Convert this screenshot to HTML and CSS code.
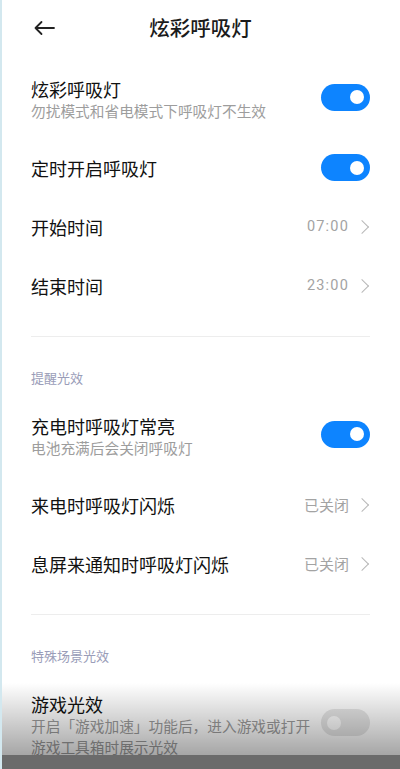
FILE: index.html
```html
<!DOCTYPE html>
<html lang="zh-CN">
<head>
<meta charset="UTF-8" />
<meta name="viewport" content="width=device-width, initial-scale=1.0">
<title>炫彩呼吸灯</title>
<link rel="stylesheet" href="styles.css">
</head>
<body>
<div class="page">
<div class="header">
<svg class="back" width="22" height="16" viewBox="0 0 22 16">
<path d="M21 8H2.5M8.5 2L2.5 8L8.5 14" fill="none" stroke="#222" stroke-width="1.8" stroke-linecap="round" stroke-linejoin="round"/>
</svg>
<h1>炫彩呼吸灯</h1>
</div>

<div class="row two first">
<div class="text">
<div class="title">炫彩呼吸灯</div>
<div class="sub">勿扰模式和省电模式下呼吸灯不生效</div>
</div>
<span class="switch on"></span>
</div>

<div class="row">
<div class="title">定时开启呼吸灯</div>
<span class="switch on"></span>
</div>

<div class="row">
<div class="title">开始时间</div>
<div class="value"><span class="num">07:00</span><span class="arrow"></span></div>
</div>

<div class="row">
<div class="title">结束时间</div>
<div class="value"><span class="num">23:00</span><span class="arrow"></span></div>
</div>

<div class="divider"></div>
<div class="label">提醒光效</div>

<div class="row two">
<div class="text">
<div class="title">充电时呼吸灯常亮</div>
<div class="sub">电池充满后会关闭呼吸灯</div>
</div>
<span class="switch on"></span>
</div>

<div class="row">
<div class="title">来电时呼吸灯闪烁</div>
<div class="value">已关闭<span class="arrow"></span></div>
</div>

<div class="row">
<div class="title">息屏来通知时呼吸灯闪烁</div>
<div class="value">已关闭<span class="arrow"></span></div>
</div>

<div class="divider"></div>
<div class="label">特殊场景光效</div>

<div class="row two">
<div class="text">
<div class="title">游戏光效</div>
<div class="sub">开启「游戏加速」功能后，进入游戏或打开游戏工具箱时展示光效</div>
</div>
<span class="switch"></span>
</div>

<div class="shade"></div>
<div class="band"></div>
</div>
</body>
</html>
```

FILE: styles.css
```css
body {
margin: 0;
background: #fff;
font-family: "Noto Sans CJK SC", "Noto Sans", sans-serif;
color: #1b1b1b;
}

.page {
position: relative;
height: 769px;
overflow: hidden;
box-sizing: border-box;
border-left: 2px solid #d3e8ef;
padding: 0 30px 0 29px;
}

.header {
position: relative;
height: 56px;
display: flex;
align-items: center;
justify-content: center;
}

.header h1 {
margin: 0 0 2px;
font-size: 20.5px;
font-weight: 500;
line-height: 1;
}

.back {
position: absolute;
left: 2px;
top: 20px;
}

.row {
display: flex;
align-items: center;
justify-content: space-between;
min-height: 59px;
}

.row.two {
min-height: 0;
padding: 22px 0 17px;
}

.row.two .switch {
margin-bottom: 5px;
}

.text {
flex: 1;
min-width: 0;
margin-right: 6px;
}

.title {
font-size: 18px;
line-height: 22px;
font-weight: 400;
color: #111;
}

.sub {
font-size: 14.7px;
line-height: 21px;
color: #9d9d9d;
}

.switch {
position: relative;
flex: none;
width: 49px;
height: 27px;
border-radius: 14px;
background: #e6e6e6;
}

.switch::after {
content: "";
position: absolute;
top: 6.5px;
left: 6px;
width: 14px;
height: 14px;
border-radius: 50%;
background: #fff;
}

.switch.on {
background: #0d84ff;
}

.switch.on::after {
left: auto;
right: 6px;
}

.value {
display: flex;
align-items: center;
font-size: 15px;
color: #a3a3a3;
}

.num {
font-family: Roboto, "Noto Sans", sans-serif;
font-size: 14.5px;
letter-spacing: 1.2px;
}

.arrow {
width: 9px;
height: 9px;
margin: 0 3px 0 8px;
border-top: 1.3px solid #b8b8b8;
border-right: 1.3px solid #b8b8b8;
transform: rotate(45deg);
}

.divider {
height: 1px;
margin-top: 21px;
background: #ededed;
}

.label {
margin: 31px 0 5px;
font-size: 13px;
line-height: 20px;
color: #9a9db8;
}

.shade {
position: absolute;
left: -2px;
right: 0;
top: 683px;
height: 72px;
background: linear-gradient(rgba(0, 0, 0, 0), rgba(0, 0, 0, 0.35));
}

.band {
position: absolute;
left: -2px;
right: 0;
top: 755px;
height: 14px;
background: #6b6b6b;
}
```
